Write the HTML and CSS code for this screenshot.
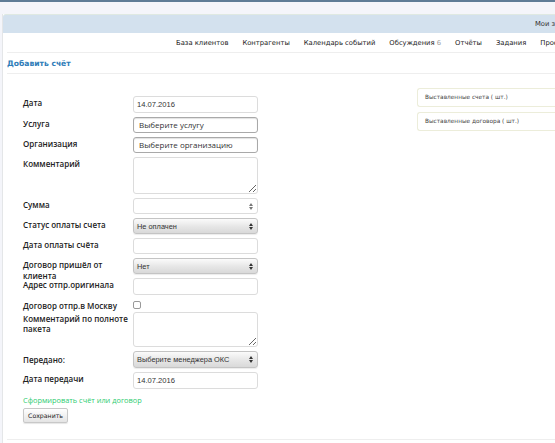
FILE: index.html
```html
<!DOCTYPE html>
<html lang="ru">
<head>
<meta charset="utf-8">
<title>Добавить счёт</title>
<link rel="stylesheet" href="styles.css">
</head>
<body>
<div class="topline"></div>
<div class="page">
  <div class="bluebar"><span>Мои заявки</span></div>
  <div class="nav">
    <span>База клиентов</span>
    <span>Контрагенты</span>
    <span>Календарь событий</span>
    <span>Обсуждения <em>6</em></span>
    <span>Отчёты</span>
    <span>Задания</span>
    <span>Проекты</span>
  </div>
  <div class="title"><a href="#">Добавить счёт</a></div>
  <div class="content">
    <div class="form">
      <div class="grid">
        <div class="lbl">Дата</div>
        <input class="inp tall" type="text" value="14.07.2016">

        <div class="lbl">Услуга</div>
        <div class="pick">Выберите услугу</div>

        <div class="lbl">Организация</div>
        <div class="pick">Выберите организацию</div>

        <div class="lbl">Комментарий</div>
        <textarea class="ta"></textarea>

        <div class="lbl">Сумма</div>
        <div class="inp num"><span></span><svg width="4" height="7" viewBox="0 0 4 7"><path d="M0 3 2 0 4 3Z M0 4 2 7 4 4Z" fill="#777"/></svg></div>

        <div class="lbl">Статус оплаты счета</div>
        <div class="sel"><span>Не оплачен</span><svg width="4" height="7" viewBox="0 0 4 7"><path d="M0 3 2 0 4 3Z M0 4 2 7 4 4Z" fill="#333"/></svg></div>

        <div class="lbl">Дата оплаты счёта</div>
        <input class="inp" type="text" value="">

        <div class="lbl two">Договор пришёл от клиента</div>
        <div class="sel"><span>Нет</span><svg width="4" height="7" viewBox="0 0 4 7"><path d="M0 3 2 0 4 3Z M0 4 2 7 4 4Z" fill="#333"/></svg></div>

        <div class="lbl">Адрес отпр.оригинала</div>
        <input class="inp tall" type="text" value="">

        <div class="lbl chk-lbl">Договор отпр.в Москву</div>
        <div class="chk-cell"><span class="chk"></span></div>

        <div class="lbl wrap">Комментарий по полноте пакета</div>
        <textarea class="ta ta2"></textarea>

        <div class="lbl lbl-pad">Передано:</div>
        <div class="sel sel-tall"><span>Выберите менеджера ОКС</span><svg width="4" height="7" viewBox="0 0 4 7"><path d="M0 3 2 0 4 3Z M0 4 2 7 4 4Z" fill="#333"/></svg></div>

        <div class="lbl">Дата передачи</div>
        <input class="inp tall" type="text" value="14.07.2016">
      </div>
      <a class="gen" href="#">Сформировать счёт или договор</a>
      <button class="btn" type="button">Сохранить</button>
    </div>
    <div class="side">
      <div class="box">Выставленные счета ( шт.)</div>
      <div class="box">Выставленные договора ( шт.)</div>
    </div>
  </div>
  <div class="foot"></div>
</div>
</body>
</html>
```
FILE: styles.css
```css
* { box-sizing: border-box; }
html, body { margin: 0; padding: 0; }
body {
  background: #f4f5fa;
  font-family: "DejaVu Sans", Verdana, sans-serif;
  color: #333;
  width: 555px;
  height: 443px;
  overflow: hidden;
}
.topline { height: 2px; background: #5f7c96; }
.page {
  margin: 12px 0 0 2px;
  background: #fff;
  border-left: 1px solid #e4e6e8;
  height: 430px;
}
.bluebar {
  height: 19px;
  background: #d3e1ee;
  border-top: 1px solid #dfe9e2;
  border-top-left-radius: 3px;
  padding-left: 532px;
  white-space: nowrap;
  overflow: hidden;
  font-size: 6.8px;
  line-height: 18px;
  color: #333;
}
.nav {
  height: 20px;
  margin-left: 4px;
  border-bottom: 1px solid #eeeeee;
  padding-left: 169px;
  display: flex;
  gap: 14px;
  white-space: nowrap;
  overflow: hidden;
  font-size: 6.8px;
  line-height: 20px;
  color: #222;
}
.nav em { font-style: normal; color: #999; }
.title {
  height: 21px;
  margin-left: 4px;
  border-bottom: 1px solid #eeeeee;
  line-height: 16px;
}
.title a {
  color: #2e7cb8;
  text-decoration: none;
  font-size: 7.6px;
  font-weight: bold;
}
.content {
  margin-left: 4px;
  display: flex;
  height: 365px;
}
.form {
  padding: 22px 0 0 16px;
  width: 300px;
}
.grid {
  display: grid;
  grid-template-columns: 110px 125px;
  row-gap: 4px;
  align-items: start;
}
.lbl {
  font-family: "Open Sans", "DejaVu Sans", sans-serif;
  font-weight: 600;
  font-size: 8px;
  line-height: 10.5px;
  color: #222;
  padding-top: 2px;
  white-space: nowrap;
}
.lbl.two { white-space: normal; padding-right: 30px; margin-bottom: -8px; }
.lbl.wrap { white-space: normal; padding-right: 4px; }
.lbl-pad { padding-top: 4px; }
.inp, .pick, .sel, .ta {
  display: block;
  width: 125px;
  height: 16px;
  margin: 0;
  border: 1px solid #dcdcdc;
  border-radius: 3px;
  background: #fff;
  font-family: "Liberation Sans", Arial, sans-serif;
  font-size: 7.6px;
  color: #333;
  padding: 0 3px;
  outline: none;
}
.inp.tall { height: 17px; }
.pick {
  border-color: #a9a9a9;
  box-shadow: inset 0 1px 1px rgba(0,0,0,0.12);
  font-family: "Open Sans", "DejaVu Sans", sans-serif;
  font-size: 8px;
  line-height: 14px;
  padding-left: 5px;
}
.ta {
  height: 37px;
  resize: both;
}
.ta2 { height: 35px; }
.num, .sel {
  display: flex;
  align-items: center;
  justify-content: space-between;
  padding: 0 4px 0 3px;
}
.sel {
  border-color: #c4c4c4;
  background: linear-gradient(#fbfbfb, #e6e6e6 55%, #d9d9d9);
  box-shadow: 0 1px 1px rgba(0,0,0,0.08);
  font-size: 7.4px;
}
.sel-tall { height: 17px; }
.chk-lbl { margin-bottom: -4px; }
.chk-cell { height: 5px; padding-top: 2px; }
.chk {
  display: block;
  width: 8px;
  height: 8px;
  border: 1px solid #999;
  border-radius: 2px;
  background: #fff;
}
.gen {
  display: block;
  margin-top: 6px;
  color: #2ecc71;
  text-decoration: none;
  font-family: "Open Sans", "DejaVu Sans", sans-serif;
  font-size: 7.4px;
  line-height: 10px;
}
.btn {
  display: block;
  margin-top: 3px;
  width: 45px;
  height: 15px;
  padding: 0;
  border: 1px solid #c8c8c8;
  border-radius: 2px;
  background: linear-gradient(#ffffff, #e4e4e4);
  box-shadow: 0 1px 1px rgba(0,0,0,0.1);
  font-family: "DejaVu Sans", sans-serif;
  font-size: 6.2px;
  color: #222;
}
.side {
  margin-left: auto;
  width: 138px;
  padding-top: 14px;
  display: flex;
  flex-direction: column;
  gap: 5px;
}
.box {
  height: 19px;
  border: 1px solid #ecedda;
  border-right: none;
  border-radius: 3px 0 0 3px;
  padding-left: 7px;
  font-size: 5.8px;
  line-height: 17px;
  color: #444;
  white-space: nowrap;
}
.foot {
  margin-left: 4px;
  border-top: 1px solid #eeeeee;
}
```
